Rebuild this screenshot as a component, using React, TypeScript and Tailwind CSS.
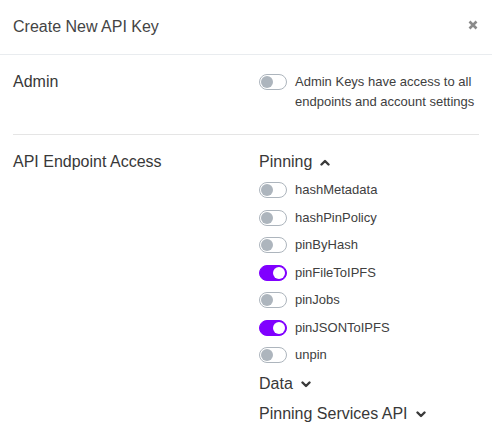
import { useState } from "react";

const endpoints = [
  { name: "hashMetadata", on: false },
  { name: "hashPinPolicy", on: false },
  { name: "pinByHash", on: false },
  { name: "pinFileToIPFS", on: true },
  { name: "pinJobs", on: false },
  { name: "pinJSONToIPFS", on: true },
  { name: "unpin", on: false },
];

const Chevron = ({ up }: { up?: boolean }) => (
  <svg width="10" height="7" viewBox="0 0 10 7" className="shrink-0">
    <polyline
      points={up ? "1.5,5.5 5,2 8.5,5.5" : "1.5,1.5 5,5 8.5,1.5"}
      fill="none"
      stroke="#3a3a3a"
      strokeWidth="2.4"
      strokeLinecap="round"
      strokeLinejoin="round"
    />
  </svg>
);

const Switch = ({ on, onClick }: { on: boolean; onClick: () => void }) => (
  <button
    onClick={onClick}
    className={`relative w-[28px] h-4 rounded-full border shrink-0 ${
      on ? "bg-[#8000ff] border-[#8000ff]" : "bg-white border-[#adb5bd]"
    }`}
  >
    <span
      className={`absolute top-[1px] w-3 h-3 rounded-full ${
        on ? "left-[13px] bg-white" : "left-[1px] bg-[#adb5bd]"
      }`}
    />
  </button>
);

export default function App() {
  const [admin, setAdmin] = useState(false);
  const [items, setItems] = useState(endpoints);

  const toggle = (i: number) =>
    setItems((prev) => prev.map((it, j) => (j === i ? { ...it, on: !it.on } : it)));

  return (
    <div className="w-[492px] h-[440px] bg-white font-[Liberation_Sans,Arial,sans-serif] text-[#383838]">
      {/* Header */}
      <div className="flex items-center justify-between h-[55px] px-[13px] border-b border-[#e9ecef]">
        <span className="text-base leading-6 text-[#444]">Create New API Key</span>
        <button className="mr-[1px] mb-[5px]" aria-label="Close">
          <svg width="10" height="10" viewBox="0 0 10 10">
            <path d="M1.5 1.5 L8.5 8.5 M8.5 1.5 L1.5 8.5" stroke="#8a8a8a" strokeWidth="2.6" />
          </svg>
        </button>
      </div>

      <div className="px-[13px]">
        {/* Admin */}
        <div className="flex pt-[17px] pb-[22px] border-b border-[#e5e5e5]">
          <div className="w-[246px] text-base leading-5">Admin</div>
          <div className="flex gap-2">
            <div className="h-5 flex items-center">
              <Switch on={admin} onClick={() => setAdmin(!admin)} />
            </div>
            <p className="text-[13px] leading-5 text-[#404040]">
              Admin Keys have access to all
              <br />
              endpoints and account settings
            </p>
          </div>
        </div>

        {/* Endpoint access */}
        <div className="flex pt-[15px]">
          <div className="w-[246px] text-base leading-6">API Endpoint Access</div>
          <div className="flex flex-col">
            <div className="flex items-center gap-2 text-base leading-6">
              Pinning <Chevron up />
            </div>
            <div className="flex flex-col gap-[7.5px] mt-[6px]">
              {items.map((it, i) => (
                <div key={it.name} className="flex items-center gap-2 h-5">
                  <Switch on={it.on} onClick={() => toggle(i)} />
                  <span className="text-[13px] text-[#404040]">{it.name}</span>
                </div>
              ))}
            </div>
            <div className="flex items-center gap-2 text-base leading-6 mt-[7px]">
              Data <Chevron />
            </div>
            <div className="flex items-center gap-2 text-base leading-6 mt-[6px]">
              Pinning Services API <Chevron />
            </div>
          </div>
        </div>
      </div>
    </div>
  );
}
